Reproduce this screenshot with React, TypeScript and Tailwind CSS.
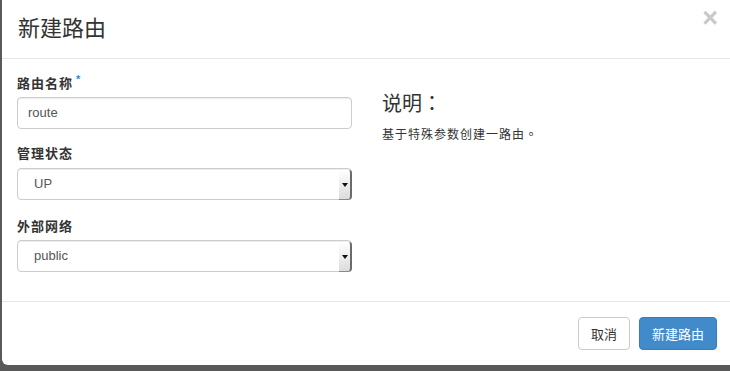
import React from "react";

const cjk = '"Noto Sans CJK SC", "Liberation Sans", sans-serif';
const cjkTC = '"Noto Sans CJK TC", "Noto Sans CJK SC", sans-serif';
const latin = '"Liberation Sans", "Noto Sans CJK SC", sans-serif';

function SelectBox({ value }: { value: string }) {
  return (
    <div className="relative h-[32px] w-[335px] rounded-[4px] border border-[#cccccc] bg-white shadow-[inset_0_1px_1px_rgba(0,0,0,0.075)]">
      <div
        className="flex h-full items-center pl-[16px] text-[13px] text-[#555555]"
        style={{ fontFamily: latin }}
      >
        {value}
      </div>
      <div className="absolute right-[-1px] top-[1px] bottom-[-1px] flex w-[13px] items-center justify-center rounded-br-[4px] rounded-tr-[3px] border-r-2 border-b border-r-[#6b6b6b] border-b-[#8a8a8a] bg-gradient-to-b from-[#ffffff] to-[#dcdcdc]">
        <div className="h-0 w-0 border-x-[3px] border-t-[4px] border-x-transparent border-t-[#111111]" />
      </div>
    </div>
  );
}

export default function App() {
  return (
    <div className="h-[371px] w-[730px] overflow-hidden bg-[#595959]" style={{ fontFamily: cjk }}>
      <div className="ml-[2px] flex h-[365px] w-[728px] flex-col rounded-bl-[6px] bg-white">
        {/* Header */}
        <div className="relative h-[59px] border-b border-[#e5e5e5] pl-[16px] pt-[13px]">
          <h4 className="text-[22px] leading-[26px] font-normal text-[#333333]">新建路由</h4>
          <div
            className="absolute right-[12px] top-[3px] text-[27px] leading-[30px] font-bold text-[#c8c8c8]"
            style={{ fontFamily: latin }}
          >
            ×
          </div>
        </div>

        {/* Body */}
        <div className="flex h-[243px] border-b border-[#e5e5e5] pl-[15px] pt-[15px]">
          <div className="w-[335px]">
            <label className="flex h-[17px] items-start text-[13px] leading-[17px] font-bold tracking-[1px] text-[#333333]">
              路由名称
              <span className="ml-[3px] text-[11px] leading-[11px] text-[#3a87c9]" style={{ fontFamily: latin }}>*</span>
            </label>
            <div className="mt-[6px] flex h-[32px] w-[335px] items-center rounded-[4px] border border-[#cccccc] bg-white pl-[10px] text-[13px] text-[#555555] shadow-[inset_0_1px_1px_rgba(0,0,0,0.075)]" style={{ fontFamily: latin }}>
              route
            </div>

            <label className="mt-[15px] block h-[17px] text-[13px] leading-[17px] font-bold tracking-[1px] text-[#333333]">
              管理状态
            </label>
            <div className="mt-[7px]">
              <SelectBox value="UP" />
            </div>

            <label className="mt-[17px] block h-[17px] text-[13px] leading-[17px] font-bold tracking-[1px] text-[#333333]">
              外部网络
            </label>
            <div className="mt-[6px]">
              <SelectBox value="public" />
            </div>
          </div>

          <div className="ml-[30px] pt-[18px]">
            <h3 className="text-[20px] leading-[22px] font-normal text-[#333333]" style={{ fontFamily: cjkTC }}>
              说明：
            </h3>
            <p className="mt-[11px] text-[12px] leading-[17px] tracking-[1px] text-[#333333]" style={{ fontFamily: cjkTC }}>
              基于特殊参数创建一路由。
            </p>
          </div>
        </div>

        {/* Footer */}
        <div className="flex flex-1 items-start justify-end gap-[9px] pr-[13px] pt-[15px]">
          <button className="h-[33px] w-[52px] rounded-[4px] border border-[#cccccc] bg-white text-[13px] text-[#333333]">
            取消
          </button>
          <button className="h-[33px] w-[78px] rounded-[4px] border border-[#357ebd] bg-[#428bca] text-[13px] text-white">
            新建路由
          </button>
        </div>
      </div>
    </div>
  );
}
